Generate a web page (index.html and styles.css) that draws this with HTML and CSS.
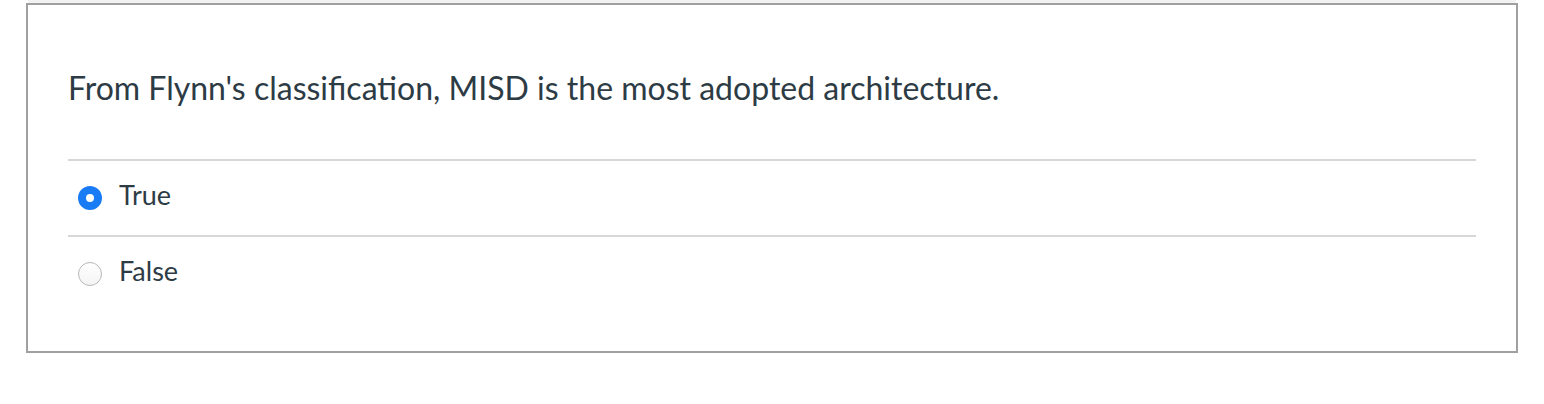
FILE: index.html
```html
<!DOCTYPE html>
<html lang="en">
<head>
<meta charset="utf-8">
<title>Quiz question</title>
<link rel="stylesheet" href="styles.css">
</head>
<body>
<div class="top-strip"></div>
<div class="question">
  <div class="question-text">From Flynn's classification, MISD is the most adopted architecture.</div>
  <div class="answers">
    <label class="answer">
      <span class="radio checked"></span>
      <span class="answer-label">True</span>
    </label>
    <label class="answer">
      <span class="radio"></span>
      <span class="answer-label">False</span>
    </label>
  </div>
</div>
</body>
</html>
```
FILE: styles.css
```css
html, body {
  margin: 0;
  padding: 0;
  background: #ffffff;
}
body {
  font-family: Lato, "Open Sans", "Liberation Sans", sans-serif;
  color: #2d3b45;
  width: 1544px;
  height: 404px;
  overflow: hidden;
}
.top-strip {
  margin-left: 28px;
  width: 1488px;
  height: 3px;
  background: #f2f2f2;
}
.question {
  margin-left: 26px;
  height: 346px;
  border: 2px solid #a0a0a0;
  padding: 0 40px;
  box-sizing: content-box;
  width: 1408px;
}
.question-text {
  font-size: 32px;
  line-height: 45px;
  padding-top: 60px;
  padding-bottom: 49px;
}
.answers {
  display: flex;
  flex-direction: column;
}
.answer {
  display: flex;
  align-items: center;
  border-top: 2px solid #d7d7d7;
  height: 74px;
}
.radio {
  box-sizing: border-box;
  width: 24px;
  height: 24px;
  border-radius: 50%;
  margin-left: 10px;
  margin-right: 17px;
  border: 1px solid #b8b8b8;
  background: linear-gradient(#ffffff, #f4f4f4);
  flex: none;
}
.radio.checked {
  border: 8px solid #1a7cf5;
  background: #ffffff;
}
.answer-label {
  font-size: 27px;
  line-height: 36px;
  margin-top: -6px;
}
```
